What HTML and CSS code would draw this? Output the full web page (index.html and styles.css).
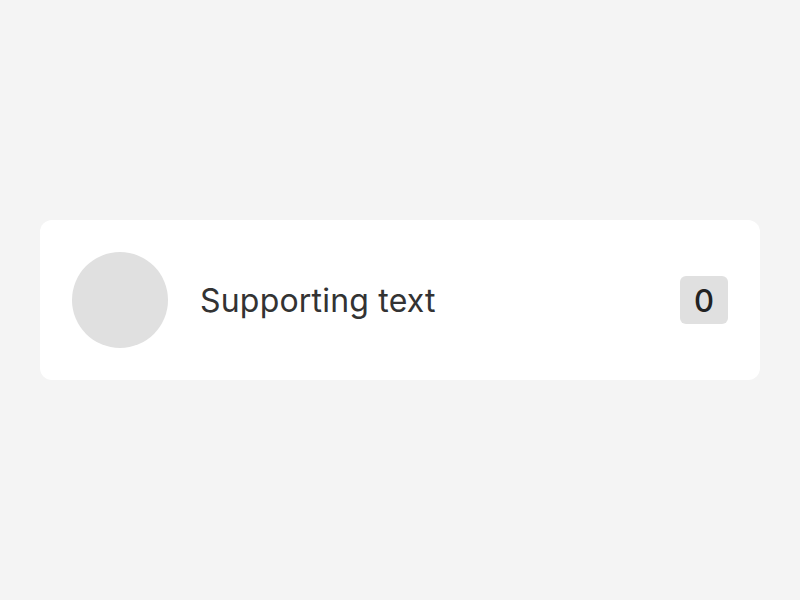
FILE: index.html
```html
<!DOCTYPE html>
<html>
<head>
<meta charset="utf-8">
<link rel="stylesheet" href="styles.css">
</head>
<body>
<main class="page">
  <div class="card">
    <div class="avatar"></div>
    <div class="label">Supporting text</div>
    <div class="badge">0</div>
  </div>
</main>
</body>
</html>
```
FILE: styles.css
```css
html, body {
  margin: 0;
  padding: 0;
  background: #f4f4f4;
}
.page {
  width: 800px;
  height: 600px;
  display: flex;
  align-items: center;
  justify-content: center;
  box-sizing: border-box;
  padding: 0 40px;
}
.card {
  flex: 1;
  height: 160px;
  box-sizing: border-box;
  background: #ffffff;
  border-radius: 12px;
  padding: 0 32px;
  display: flex;
  align-items: center;
  gap: 32px;
}
.avatar {
  width: 96px;
  height: 96px;
  border-radius: 50%;
  background: #e0e0e0;
  flex-shrink: 0;
}
.label {
  flex: 1;
  font-family: Inter, "Liberation Sans", Arial, sans-serif;
  font-size: 32px;
  letter-spacing: 0.2px;
  color: #333333;
}
.badge {
  width: 48px;
  height: 48px;
  border-radius: 6px;
  background: #e0e0e0;
  display: flex;
  align-items: center;
  justify-content: center;
  font-family: Inter, "Liberation Sans", Arial, sans-serif;
  font-size: 31px;
  font-weight: 500;
  color: #222222;
}
```
